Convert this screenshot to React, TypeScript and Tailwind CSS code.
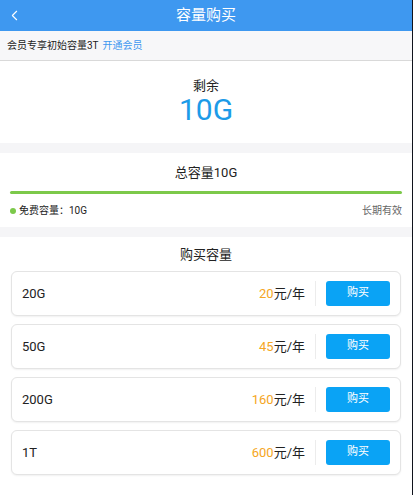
import { ChevronLeft } from 'lucide-react'

const PLANS = [
  { size: '20G', price: '20' },
  { size: '50G', price: '45' },
  { size: '200G', price: '160' },
  { size: '1T', price: '600' },
]

const FONT = { fontFamily: 'Roboto, "Noto Sans CJK SC", sans-serif' }

function PlanCard({ size, price }: { size: string; price: string }) {
  return (
    <div className="flex h-[45px] items-center rounded-[6px] border border-[#e4e4e4] bg-white pl-[10px] pr-[10px] shadow-[0_1px_2px_rgba(0,0,0,0.06)]">
      <span className="flex-1 text-[13px] text-[#222]">{size}</span>
      <span className="text-[13px] text-[#222]">
        <span className="text-[#f5a623]">{price}</span>元/年
      </span>
      <div className="mx-[10px] h-[25px] w-px bg-[#ececec]" />
      <button
        type="button"
        className="h-[25px] w-[64px] rounded-[3px] bg-[#0aa3f5] text-[11px] text-white"
      >
        购买
      </button>
    </div>
  )
}

export default function App() {
  return (
    <div className="h-[495px] w-[413px] overflow-hidden border-r border-[#10131c] bg-white" style={FONT}>
      {/* Header */}
      <div className="relative flex h-[31px] items-center justify-center bg-[#3e98f0]">
        <ChevronLeft className="absolute left-[6px] top-[7px] text-white" size={17} strokeWidth={1.5} />
        <h1 className="text-[15px] text-white">容量购买</h1>
      </div>

      {/* Member notice */}
      <div className="flex h-[30px] items-center border-b border-[#d9d9d9] bg-[#f7f7f9] px-[7px] text-[10px] text-[#222]">
        会员专享初始容量3T
        <span className="ml-[4px] text-[#3e98f0]">开通会员</span>
      </div>

      {/* Remaining */}
      <div className="flex h-[82px] flex-col items-center pt-[16px]">
        <p className="text-[13px] leading-[18px] text-[#222]">剩余</p>
        <p className="text-[30px] leading-[30px] text-[#1c9be8]">10G</p>
      </div>

      <div className="h-[10px] bg-[#f5f5f7]" />

      {/* Total capacity */}
      <div className="px-[10px] pt-[11px]">
        <p className="text-center text-[13px] leading-[18px] text-[#222]">总容量10G</p>
        <div className="mt-[9px] h-[3px] rounded-full bg-[#7cc94a]" />
        <div className="flex h-[33px] items-center justify-between text-[10px]">
          <span className="flex items-center text-[#222]">
            <span className="mr-[3px] h-[6px] w-[6px] rounded-full bg-[#7cc94a]" />
            免费容量：10G
          </span>
          <span className="text-[#666]">长期有效</span>
        </div>
      </div>

      <div className="h-[10px] bg-[#f5f5f7]" />

      {/* Purchase */}
      <div className="px-[11px] pt-[9px]">
        <p className="text-center text-[13px] leading-[18px] text-[#222]">购买容量</p>
        <div className="mt-[7px] flex flex-col gap-[8px]">
          {PLANS.map((p) => (
            <PlanCard key={p.size} size={p.size} price={p.price} />
          ))}
        </div>
      </div>
    </div>
  )
}
